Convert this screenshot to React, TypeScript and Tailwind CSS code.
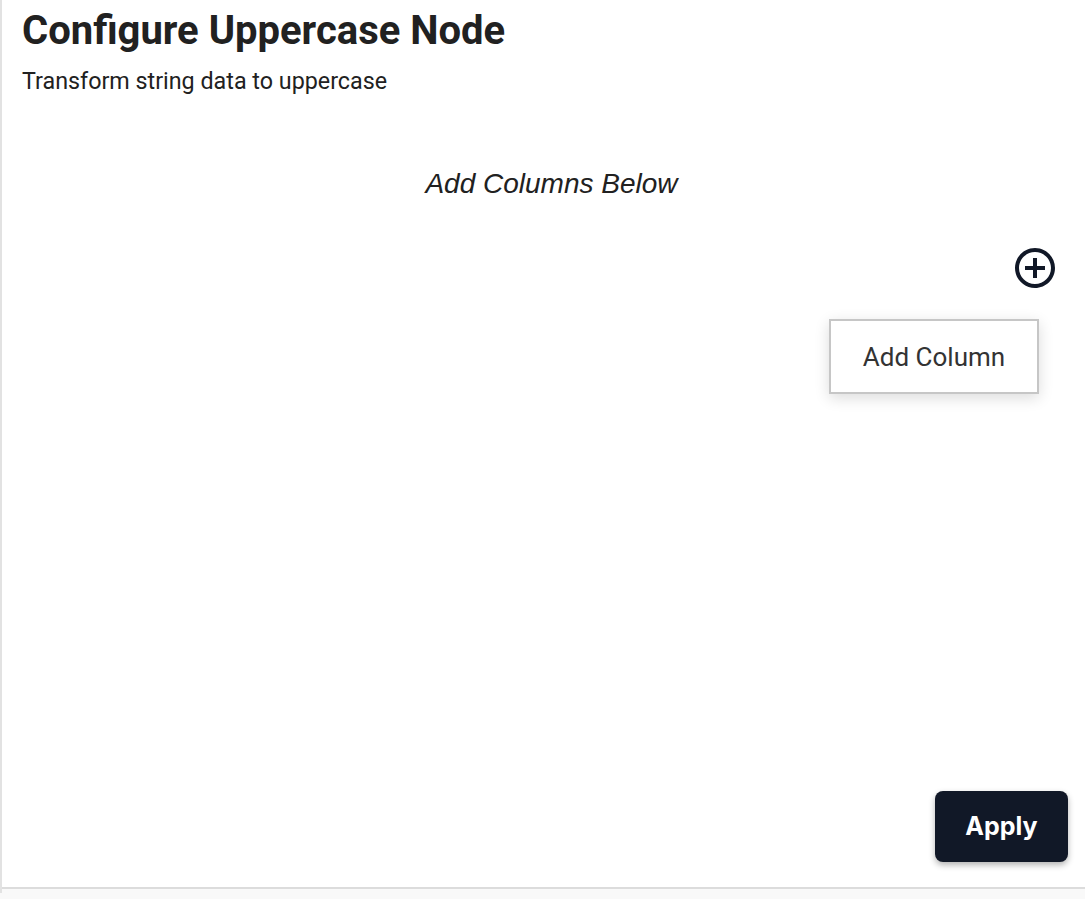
import { MdAddCircleOutline } from "react-icons/md";

function ColumnMenu() {
  return (
    <div className="mt-[44px] flex flex-col items-end">
      <button className="mr-[9px] flex h-12 w-12 items-center justify-center text-[#111827]">
        <MdAddCircleOutline size={48} />
      </button>
      <div className="mr-[29px] mt-[27px] flex h-[75px] w-[210px] items-center justify-center border-2 border-[#c6c6c6] bg-white shadow-[0_4px_14px_rgba(0,0,0,0.14)]">
        <span className="font-['Roboto',sans-serif] text-[26px] leading-[30px] text-[#333333]">Add Column</span>
      </div>
    </div>
  );
}

export default function App() {
  return (
    <div className="min-h-screen bg-[#f9f9f9]">
      <div className="h-[893px] w-full border-l-2 border-[#e2e2e2]">
        <div className="flex h-[889px] flex-col border-b-2 border-[#dcdcdc] bg-white pl-5 pr-[17px]">
          <h1 className="mt-[7px] font-['Roboto',sans-serif] text-[40px] font-bold leading-[48px] text-[#212121]">
            Configure Uppercase Node
          </h1>
          <p className="mt-3 font-['Roboto',sans-serif] text-[23.3px] leading-[28px] text-[#212121]">
            Transform string data to uppercase
          </p>
          <p className="mt-[73px] pl-[13px] text-center font-['Liberation_Sans',Arial,sans-serif] text-[28px] italic leading-[32px] text-[#212121]">
            Add Columns Below
          </p>
          <ColumnMenu />
          <div className="mt-auto mb-[25px] flex justify-end">
            <button className="h-[71px] w-[133px] rounded-lg bg-[#111827] font-['Inter',sans-serif] text-[25px] font-bold text-white shadow-[0_3px_6px_rgba(0,0,0,0.3)]">
              Apply
            </button>
          </div>
        </div>
      </div>
    </div>
  );
}
